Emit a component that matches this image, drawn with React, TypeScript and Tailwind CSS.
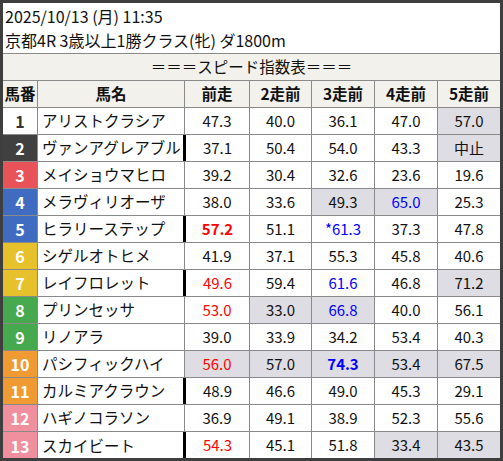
type Cell = { v: string; c?: 'r' | 'b'; bold?: boolean; g?: boolean }

type Row = { n: number; name: string; bar?: boolean; cells: Cell[] }

const numBg: Record<number, string> = {
  1: 'bg-white text-[#333]',
  2: 'bg-[#404040] text-white',
  3: 'bg-[#e8535a] text-white',
  4: 'bg-[#3f6cc0] text-white',
  5: 'bg-[#3f6cc0] text-white',
  6: 'bg-[#e6c12c] text-white',
  7: 'bg-[#e6c12c] text-white',
  8: 'bg-[#47a94d] text-white',
  9: 'bg-[#47a94d] text-white',
  10: 'bg-[#f09a34] text-white',
  11: 'bg-[#f09a34] text-white',
  12: 'bg-[#f0909f] text-white',
  13: 'bg-[#f0909f] text-white',
}

const c = (v: string, o: Partial<Cell> = {}): Cell => ({ v, ...o })

const rows: Row[] = [
  { n: 1, name: 'アリストクラシア', cells: [c('47.3'), c('40.0'), c('36.1'), c('47.0'), c('57.0', { g: true })] },
  { n: 2, name: 'ヴァンアグレアブル', bar: true, cells: [c('37.1'), c('50.4'), c('54.0'), c('43.3'), c('中止', { g: true })] },
  { n: 3, name: 'メイショウマヒロ', cells: [c('39.2'), c('30.4'), c('32.6'), c('23.6'), c('19.6')] },
  { n: 4, name: 'メラヴィリオーザ', cells: [c('38.0'), c('33.6'), c('49.3', { g: true }), c('65.0', { g: true, c: 'b' }), c('25.3')] },
  { n: 5, name: 'ヒラリーステップ', bar: true, cells: [c('57.2', { c: 'r', bold: true }), c('51.1'), c('*61.3', { c: 'b' }), c('37.3'), c('47.8')] },
  { n: 6, name: 'シゲルオトヒメ', cells: [c('41.9'), c('37.1'), c('55.3'), c('45.8'), c('40.6')] },
  { n: 7, name: 'レイフロレット', bar: true, cells: [c('49.6', { c: 'r' }), c('59.4'), c('61.6', { c: 'b' }), c('46.8'), c('71.2', { g: true })] },
  { n: 8, name: 'プリンセッサ', cells: [c('53.0', { c: 'r' }), c('33.0', { g: true }), c('66.8', { g: true, c: 'b' }), c('40.0'), c('56.1')] },
  { n: 9, name: 'リノアラ', cells: [c('39.0'), c('33.9'), c('34.2'), c('53.4'), c('40.3')] },
  { n: 10, name: 'パシフィックハイ', cells: [c('56.0', { c: 'r', g: true }), c('57.0', { g: true }), c('74.3', { c: 'b', bold: true, g: true }), c('53.4', { g: true }), c('67.5', { g: true })] },
  { n: 11, name: 'カルミアクラウン', bar: true, cells: [c('48.9'), c('46.6'), c('49.0'), c('45.3'), c('29.1')] },
  { n: 12, name: 'ハギノコラソン', cells: [c('36.9'), c('49.1'), c('38.9'), c('52.3'), c('55.6')] },
  { n: 13, name: 'スカイビート', bar: true, cells: [c('54.3', { c: 'r' }), c('45.1'), c('51.8'), c('33.4', { g: true }), c('43.5', { g: true })] },
]

const colW = ['w-[62px]', 'w-[63px]', 'w-[63px]', 'w-[62px]']

function NumCell({ cell, w, last }: { cell: Cell; w: string; last?: boolean }) {
  const color = cell.c === 'r' ? 'text-[#ff0000]' : cell.c === 'b' ? 'text-[#0000ff]' : 'text-[#111]'
  return (
    <div
      className={`${w} h-full flex items-center justify-center ${last ? '' : 'border-r border-[#8a8a8a]'} ${
        cell.g ? 'bg-[#dddde3]' : 'bg-white'
      } ${color} ${cell.bold ? 'font-bold' : ''}`}
    >
      {cell.v}
    </div>
  )
}

export default function App() {
  return (
    <div
      className="w-[503px] h-[461px] overflow-hidden border-[3px] border-[#3e3e3e] bg-white text-[15px] text-[#111]"
      style={{ fontFamily: '"Noto Sans CJK JP", "Noto Sans", sans-serif' }}
    >
      <div className="h-[51px] border-b border-[#8a8a8a] pl-[2px] pt-[1px] leading-[24px] text-[16px]">
        <div>2025/10/13 (月) 11:35</div>
        <div>京都4R 3歳以上1勝クラス(牝) ダ1800m</div>
      </div>
      <div className="h-[27px] border-b border-[#8a8a8a] bg-[#f2f1ec] flex items-center justify-center text-[15.5px]">
        ＝＝＝スピード指数表＝＝＝
      </div>
      <div className="h-[27px] border-b border-[#8a8a8a] bg-[#f2f1ec] flex font-bold text-[15.5px]">
        <div className="w-[35px] border-r border-[#8a8a8a] flex items-center justify-center">馬番</div>
        <div className="w-[147px] border-r border-[#8a8a8a] flex items-center justify-center">馬名</div>
        <div className="w-[65px] border-r border-[#8a8a8a] flex items-center justify-center">前走</div>
        {['2走前', '3走前', '4走前', '5走前'].map((h, i) => (
          <div
            key={h}
            className={`${colW[i]} ${i < 3 ? 'border-r border-[#8a8a8a]' : ''} flex items-center justify-center`}
          >
            {h}
          </div>
        ))}
      </div>
      {rows.map((r, ri) => (
        <div key={r.n} className={`h-[27px] flex ${ri < rows.length - 1 ? 'border-b border-[#8a8a8a]' : ''}`}>
          <div
            className={`w-[35px] h-full border-r border-[#8a8a8a] flex items-center justify-center font-bold text-[16px] ${numBg[r.n]}`}
          >
            {r.n}
          </div>
          <div
            className={`${
              r.bar ? 'w-[148px] border-r-[3px] border-black' : 'w-[147px] border-r border-[#8a8a8a]'
            } h-full flex items-center pl-[4px] whitespace-nowrap overflow-hidden text-[15.5px]`}
          >
            {r.name}
          </div>
          <NumCell cell={r.cells[0]} w={r.bar ? 'w-[64px]' : 'w-[65px]'} />
          {r.cells.slice(1).map((cell, i) => (
            <NumCell key={i} cell={cell} w={colW[i]} last={i === 3} />
          ))}
        </div>
      ))}
    </div>
  )
}
